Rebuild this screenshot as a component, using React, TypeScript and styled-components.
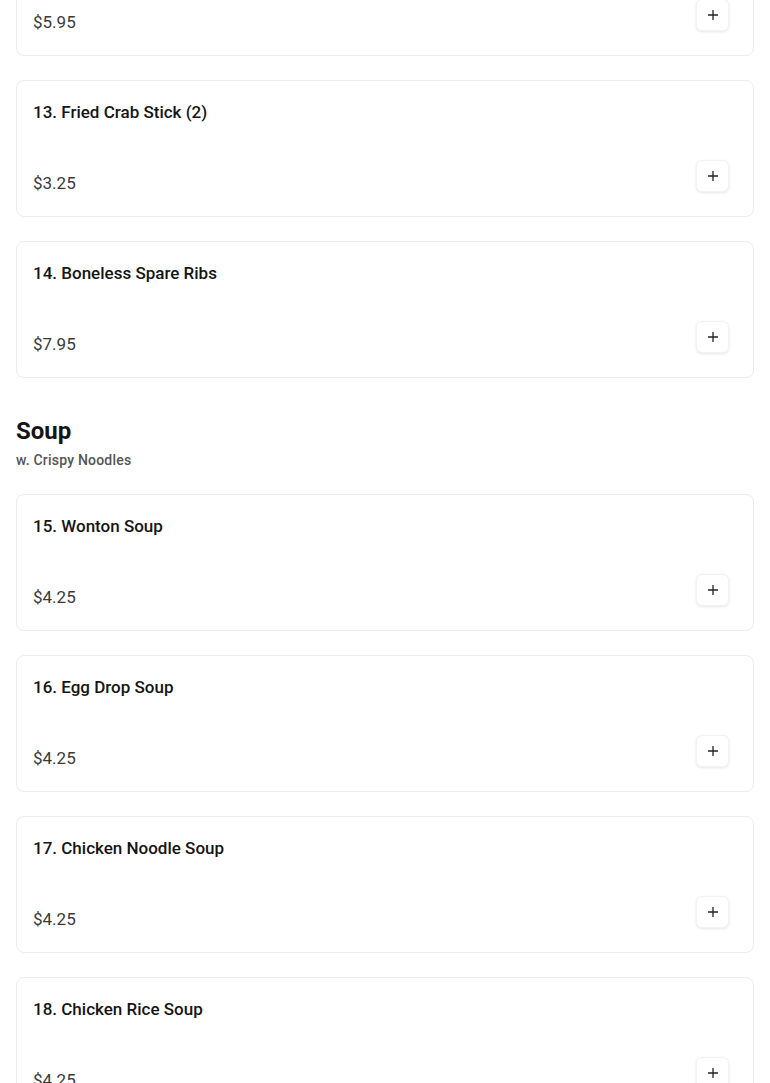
import React from "react";
import styled, { createGlobalStyle } from "styled-components";

const Global = createGlobalStyle`
  html, body { margin: 0; padding: 0; background: #fff; }
  body { font-family: Roboto, "Liberation Sans", Arial, sans-serif; color: #1a1a1a; }
  * { box-sizing: border-box; }
`;

const Page = styled.main`
  display: flex;
  flex-direction: column;
  gap: 24px;
  padding: 0 16px 40px;
  margin-top: -81px;
`;

const SectionHeader = styled.header`
  display: flex;
  flex-direction: column;
  gap: 4px;
  margin-top: 13px;
`;

const SectionTitle = styled.h2`
  margin: 0;
  font-size: 24px;
  line-height: 32px;
  font-weight: 700;
  color: #151515;
`;

const SectionNote = styled.p`
  margin: 0;
  font-size: 14px;
  line-height: 19px;
  font-weight: 500;
  letter-spacing: 0.2px;
  color: #555;
`;

const Card = styled.article`
  display: flex;
  flex-direction: column;
  border: 1px solid #ececec;
  border-radius: 8px;
  background: #fff;
  padding: 19px 16px 21px;
`;

const ItemName = styled.h3`
  margin: 0;
  font-size: 17px;
  line-height: 24px;
  font-weight: 500;
  color: #151515;
`;

const Bottom = styled.div`
  display: flex;
  justify-content: space-between;
  align-items: flex-start;
  margin-top: 36px;
`;

const Price = styled.span`
  margin-top: 11px;
  font-size: 17px;
  line-height: 24px;
  color: #3a3a3a;
`;

const AddButton = styled.button`
  width: 33px;
  height: 32px;
  margin-right: 8px;
  display: flex;
  align-items: center;
  justify-content: center;
  padding: 0;
  border: 1px solid #f2f2f2;
  border-radius: 6px;
  background: #fff;
  box-shadow: 0 1px 3px rgba(0, 0, 0, 0.1);
  color: #222;
  cursor: pointer;
`;

const PlusIcon = () => (
  <svg width="12" height="12" viewBox="0 0 12 12" fill="none" stroke="currentColor" strokeWidth="1.3">
    <path d="M6 1v10M1 6h10" />
  </svg>
);

type Item = { name: string; price: string };

const MenuCard = ({ item }: { item: Item }) => (
  <Card>
    <ItemName>{item.name}</ItemName>
    <Bottom>
      <Price>{item.price}</Price>
      <AddButton aria-label={`Add ${item.name}`}>
        <PlusIcon />
      </AddButton>
    </Bottom>
  </Card>
);

const appetizers: Item[] = [
  { name: "12. Chicken Wings (4)", price: "$5.95" },
  { name: "13. Fried Crab Stick (2)", price: "$3.25" },
  { name: "14. Boneless Spare Ribs", price: "$7.95" },
];

const soups: Item[] = [
  { name: "15. Wonton Soup", price: "$4.25" },
  { name: "16. Egg Drop Soup", price: "$4.25" },
  { name: "17. Chicken Noodle Soup", price: "$4.25" },
  { name: "18. Chicken Rice Soup", price: "$4.25" },
];

export default function App() {
  return (
    <>
      <Global />
      <Page>
        {appetizers.map((it) => (
          <MenuCard key={it.name} item={it} />
        ))}
        <SectionHeader>
          <SectionTitle>Soup</SectionTitle>
          <SectionNote>w. Crispy Noodles</SectionNote>
        </SectionHeader>
        {soups.map((it) => (
          <MenuCard key={it.name} item={it} />
        ))}
      </Page>
    </>
  );
}
